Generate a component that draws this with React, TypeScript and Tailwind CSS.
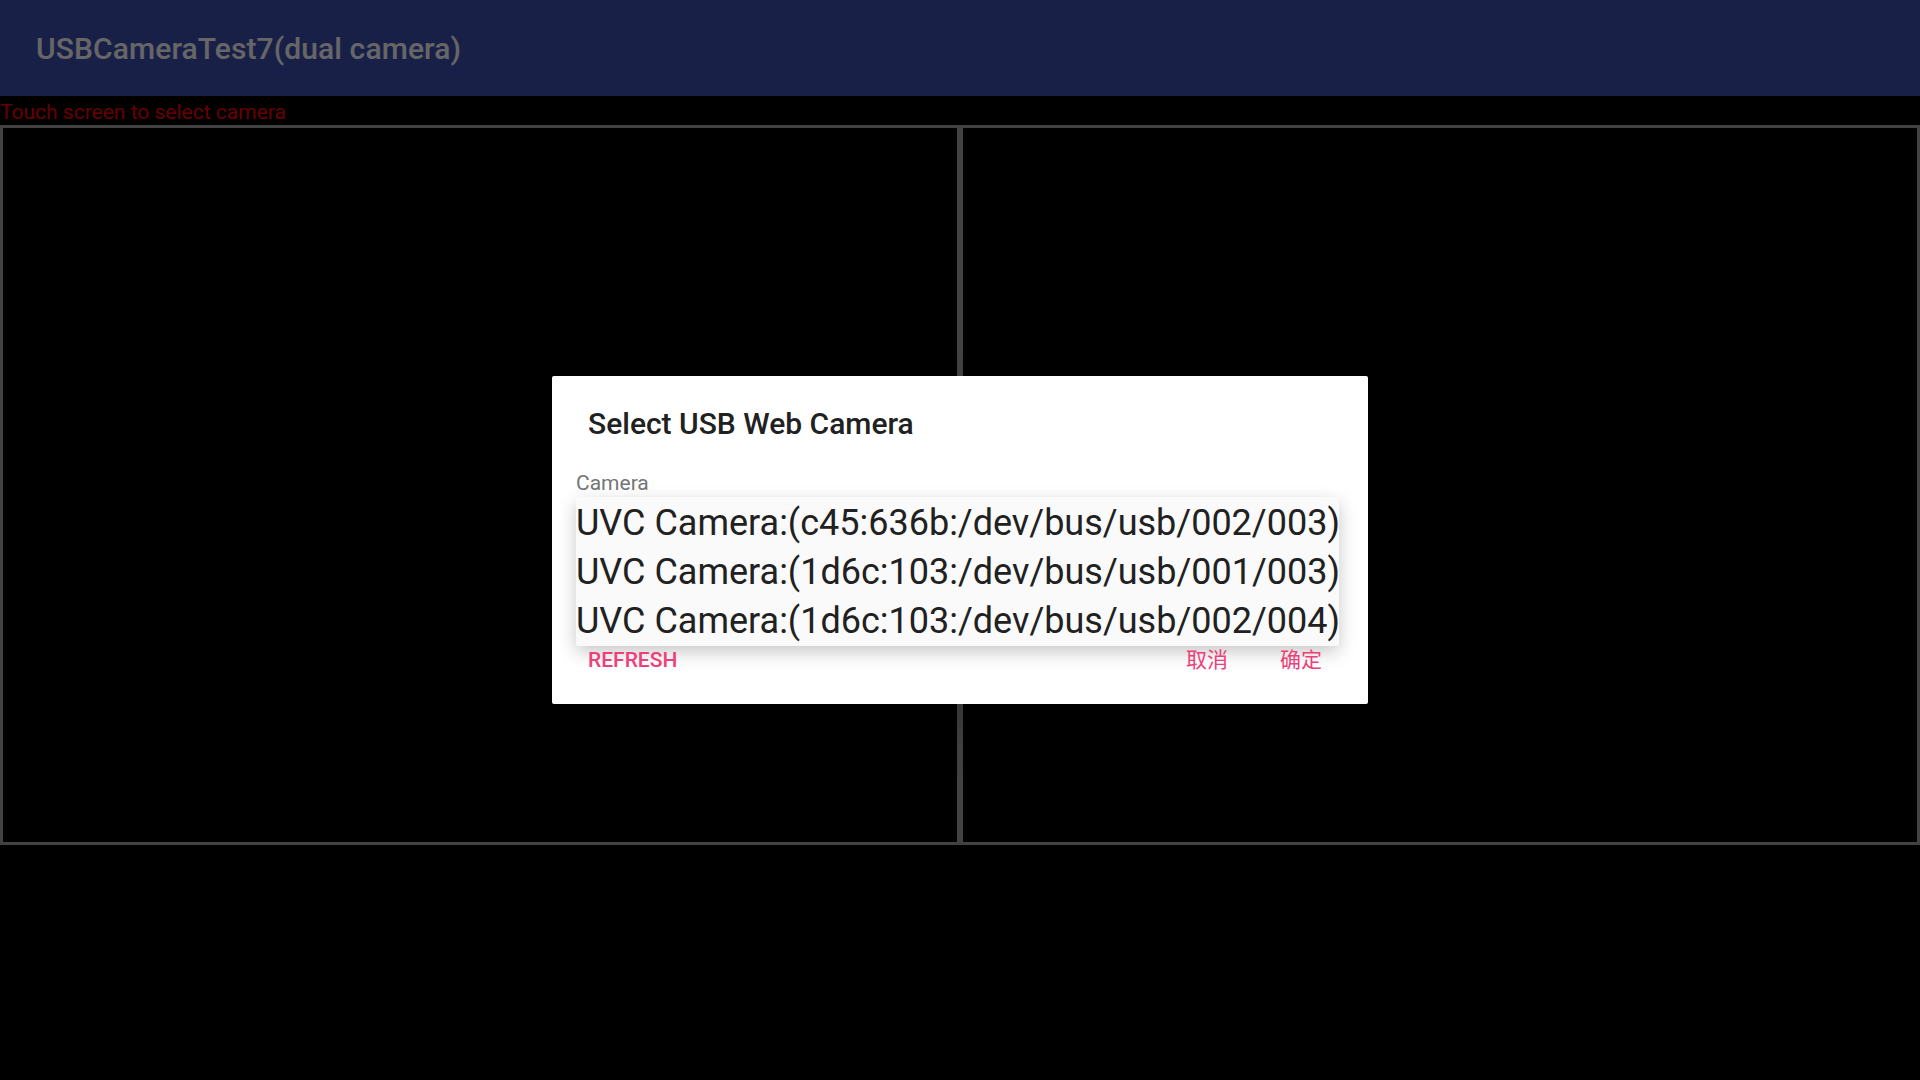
import React from 'react'

const cameras = [
    'UVC Camera:(c45:636b:/dev/bus/usb/002/003)',
    'UVC Camera:(1d6c:103:/dev/bus/usb/001/003)',
    'UVC Camera:(1d6c:103:/dev/bus/usb/002/004)',
]

export default function App() {
    return (
        <div className="relative w-[1920px] h-[1080px] overflow-hidden bg-black font-['Roboto','Noto_Sans_CJK_SC',sans-serif]">
            <header className="h-24 bg-[#3f51b5] flex items-center pl-9">
                <h1 className="text-white text-[30px] font-medium tracking-[0.1px]">USBCameraTest7(dual camera)</h1>
            </header>
            <p className="pt-[3px] text-[#ff0000] text-[21px] leading-[26px]">Touch screen to select camera</p>
            <div className="flex">
                <div className="w-[960px] h-[720px] border-[3px] border-[#a6a6a6] bg-black" />
                <div className="w-[960px] h-[720px] border-[3px] border-[#a6a6a6] bg-black" />
            </div>

            {/* dialog */}
            <div className="absolute inset-0 bg-black/60 flex items-center justify-center">
                <div className="w-[816px] bg-white rounded-[2px] pt-[30px] pb-[32px] shadow-2xl">
                    <h2 className="pl-9 text-[30px] leading-[36px] font-medium text-[#212121]">Select USB Web Camera</h2>
                    <div className="pl-6 mt-[29px]">
                        <p className="text-[21px] leading-[24px] text-[#757575]">Camera</p>
                        <ul className="mt-[2px] pt-[2px] w-[763px] bg-[#fafafa] rounded-[2px] shadow-[0_6px_18px_rgba(0,0,0,0.22)]">
                            {cameras.map((c) => (
                                <li key={c} className="text-[36px] leading-[49px] text-[#212121] whitespace-nowrap">
                                    {c}
                                </li>
                            ))}
                        </ul>
                    </div>
                    <div className="mt-[2px] flex items-center pl-9 pr-[46px] text-[21px] leading-[24px] text-[#ec407a]">
                        <button className="font-medium">REFRESH</button>
                        <div className="ml-auto flex gap-[52px]">
                            <button>取消</button>
                            <button>确定</button>
                        </div>
                    </div>
                </div>
            </div>
        </div>
    )
}
